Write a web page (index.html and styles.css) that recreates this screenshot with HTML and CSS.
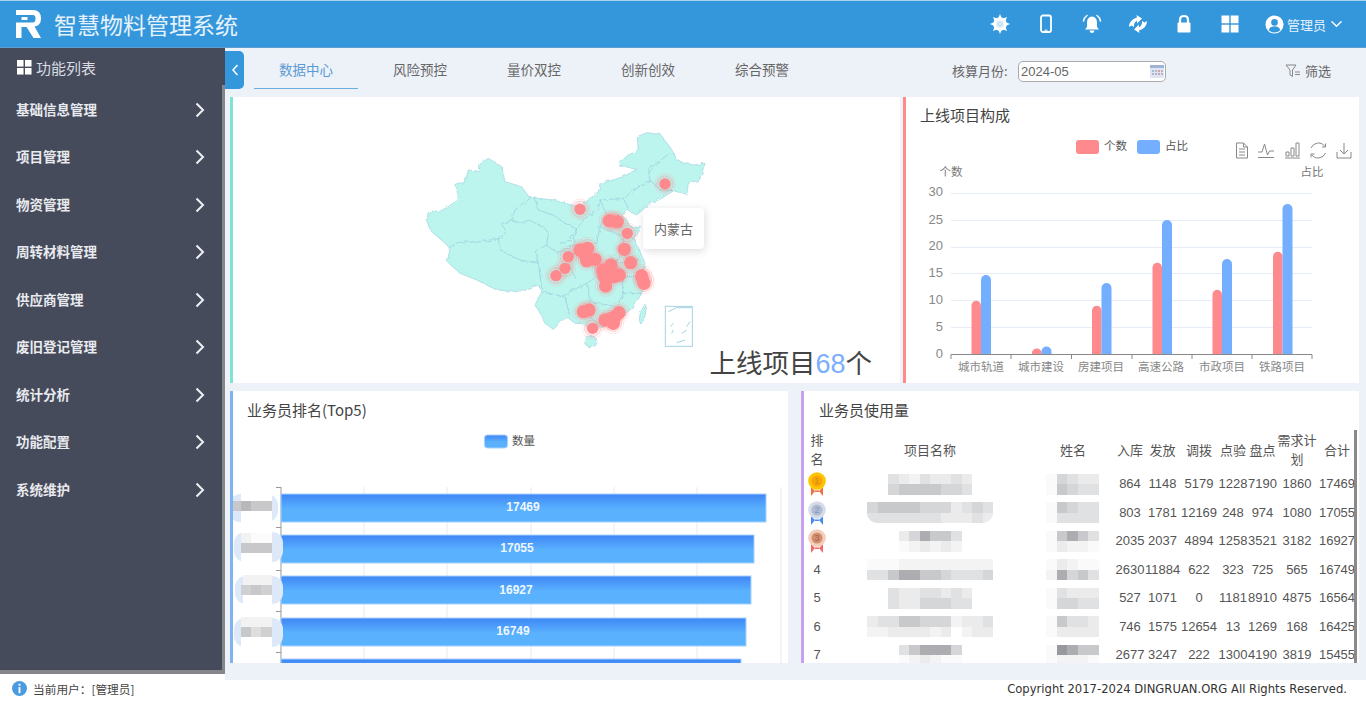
FILE: index.html
```html
<!DOCTYPE html>
<html lang="zh-CN">
<head>
<meta charset="utf-8">
<title>智慧物料管理系统</title>
<link rel="stylesheet" href="styles.css">
</head>
<body>
<div class="app">
  <header class="topbar">
    <svg class="logo" viewBox="0 0 25 28"><path class="w" fill-rule="evenodd" d="M0 0H17Q25 0 25 8.500Q25 15.500 18.500 16.500L25 28H17.500L10.500 17H5.500V28H0V12.500H17Q19.500 12.500 19.500 8.500Q19.500 5 17 5H0Z"/><rect class="w" x="5.500" y="7" width="6" height="3"/></svg>
    <div class="brand">智慧物料管理系统</div>
    <nav class="tools">
      <svg class="ti" viewBox="0 0 20 20"><circle class="w" cx="10" cy="10" r="6.800"/><path class="w" d="M10 0l1.700 4h-3.400zM10 20l-1.700-4h3.400zM0 10l4-1.700v3.400zM20 10l-4 1.700v-3.400zM3 3l4 1.500-2.500 2.500zM17 17l-4-1.500 2.500-2.500zM17 3l-1.500 4-2.500-2.500zM3 17l1.500-4 2.500 2.500z"/><circle class="sunc" cx="10" cy="10" r="3.500"/></svg>
      <svg class="ti" viewBox="0 0 20 20"><rect class="ol" x="5" y="1.500" width="10" height="16.500" rx="2"/><rect class="w" x="8.500" y="15.700" width="3" height="1"/></svg>
      <svg class="ti" viewBox="0 0 20 20"><path class="w" d="M10 2.500Q15 3 15 9V13L17 15.500H3L5 13V9Q5 3 10 2.500ZM7.500 16.500H12.500Q12 19 10 19T7.500 16.500Z"/><path class="ols" d="M1.500 7Q2 3.500 5 1.500M18.500 7Q18 3.500 15 1.500"/></svg>
      <svg class="ti" viewBox="0 0 20 20"><path class="w" d="M1 13Q1 6 9 3.500L8.500 1L14 4.500L9 9.500L9 6.800Q5.500 8.500 6 13L3.500 11.500ZM19 7Q19 14 11 16.500L11.500 19L6 15.500L11 10.500L11 13.200Q14.500 11.500 14 7L16.500 8.500Z"/></svg>
      <svg class="ti" viewBox="0 0 20 20"><path class="ols2" d="M6 9V6Q6 2 10 2T14 6V9"/><rect class="w" x="3.500" y="8.500" width="13" height="10" rx="1"/></svg>
      <svg class="ti" viewBox="0 0 20 20"><rect class="w" x="1.500" y="1.500" width="7.800" height="7.800"/><rect class="w" x="10.700" y="1.500" width="7.800" height="7.800"/><rect class="w" x="1.500" y="10.700" width="7.800" height="7.800"/><rect class="w" x="10.700" y="10.700" width="7.800" height="7.800"/></svg>
      <div class="user">
        <svg class="av" viewBox="0 0 20 20"><circle class="w" cx="10" cy="10" r="9.500"/><circle class="bl" cx="10" cy="7.800" r="3.500"/><path class="bl" d="M3.800 16Q5 11.800 10 11.800T16.200 16Q13.500 18.300 10 18.300T3.800 16Z"/></svg>
        <span>管理员</span>
        <svg class="ch" viewBox="0 0 12 8"><path class="ols" d="M1 1.500L6 6.500L11 1.500"/></svg>
      </div>
    </nav>
  </header>

  <div class="middle">
    <aside class="side">
      <div class="side-head">
        <svg class="side-ic" viewBox="0 0 16 16"><rect class="w" width="7" height="7"/><rect class="w" x="8.500" width="7" height="7"/><rect class="w" y="8.500" width="7" height="7"/><rect class="w" x="8.500" y="8.500" width="7" height="7"/></svg>
        <span>功能列表</span>
      </div>
      <ul class="menu">
        <li>基础信息管理<svg class="arr" viewBox="0 0 10 16"><path d="M1.500 1.500L8 8L1.500 14.500"/></svg></li>
        <li>项目管理<svg class="arr" viewBox="0 0 10 16"><path d="M1.500 1.500L8 8L1.500 14.500"/></svg></li>
        <li>物资管理<svg class="arr" viewBox="0 0 10 16"><path d="M1.500 1.500L8 8L1.500 14.500"/></svg></li>
        <li>周转材料管理<svg class="arr" viewBox="0 0 10 16"><path d="M1.500 1.500L8 8L1.500 14.500"/></svg></li>
        <li>供应商管理<svg class="arr" viewBox="0 0 10 16"><path d="M1.500 1.500L8 8L1.500 14.500"/></svg></li>
        <li>废旧登记管理<svg class="arr" viewBox="0 0 10 16"><path d="M1.500 1.500L8 8L1.500 14.500"/></svg></li>
        <li>统计分析<svg class="arr" viewBox="0 0 10 16"><path d="M1.500 1.500L8 8L1.500 14.500"/></svg></li>
        <li>功能配置<svg class="arr" viewBox="0 0 10 16"><path d="M1.500 1.500L8 8L1.500 14.500"/></svg></li>
        <li>系统维护<svg class="arr" viewBox="0 0 10 16"><path d="M1.500 1.500L8 8L1.500 14.500"/></svg></li>
      </ul>
      <div class="side-scroll"></div>
    </aside>

    <main class="content">
      <div class="tabbar">
        <button class="collapse"><svg viewBox="0 0 10 16"><path d="M7.500 3L3 8L7.500 13"/></svg></button>
        <div class="tabs">
          <a class="tab on">数据中心</a><a class="tab">风险预控</a><a class="tab">量价双控</a><a class="tab">创新创效</a><a class="tab">综合预警</a>
        </div>
        <label class="month">核算月份:</label>
        <div class="date">2024-05
          <svg class="cal" viewBox="0 0 14 13"><rect class="cal1" width="14" height="13" rx="1"/><rect class="cal2" width="14" height="3"/><rect class="cal3" x="2" y="5" width="2" height="2"/><rect class="cal3" x="5" y="5" width="2" height="2"/><rect class="cal4" x="8" y="5" width="2" height="2"/><rect class="cal3" x="11" y="5" width="2" height="2"/><rect class="cal3" x="2" y="8" width="2" height="2"/><rect class="cal3" x="5" y="8" width="2" height="2"/><rect class="cal4" x="8" y="8" width="2" height="2"/><rect class="cal3" x="11" y="8" width="2" height="2"/></svg>
        </div>
        <div class="filter">
          <svg class="fic" viewBox="0 0 16 14"><path class="fl" d="M1 1H11L7.500 6V12.500L5 11V6Z"/><path class="fl" d="M10 8H15M10 10.500H15"/></svg>
          <span>筛选</span>
        </div>
      </div>

      <div class="row row-top">
        <section class="panel map-panel">
          <svg class="map" viewBox="0 0 900 720">
            <defs>
              <g id="d"><circle class="halo2" r="31"/><circle class="halo1" r="25"/><circle class="dot" r="17"/></g>
              <g id="c"><circle class="dot" r="20"/></g>
              <filter id="wig" x="-5%" y="-5%" width="110%" height="110%"><feTurbulence type="fractalNoise" baseFrequency=".07" numOctaves="2" seed="4"/><feDisplacementMap in="SourceGraphic" scale="12"/></filter>
            </defs>
            <g class="wiggle">
            <path class="land" d="M47 295L65 273L85 277L130 250L145 230L135 193L165 187L175 150L208 155L210 133L235 115L275 140L285 185L335 200L358 232L430 240L475 252L490 258L520 252L565 215L570 192L640 170L680 148L625 135L650 108L685 90L682 50L710 38L750 42L785 88L800 122L850 135L885 130L868 180L835 190L830 225L790 212L755 235L715 255L680 285L650 268L635 285L650 300L662 322L695 322L672 355L690 395L705 430L698 450L715 480L695 520L672 560L640 585L600 610L570 620L540 640L525 612L495 610L470 590L430 628L405 610L385 570L375 555L395 515L385 495L320 515L260 510L200 480L150 460L112 425L120 385L100 365L65 335L47 295Z"/>
            <ellipse class="land" cx="543" cy="665" rx="18" ry="17"/>
            <path class="land" d="M705 553Q712 565 702 600L692 612Q680 590 705 553Z"/>
            <path class="prov" d="M115 385L135 370L165 365L200 367L270 355L288 335L275 310L305 300L315 270L360 235M305 300L335 310L355 300L400 320L415 340L410 375L378 392L385 430L330 420L270 390L265 355M375 233L385 270L430 285L465 310L500 325L480 360L450 370M385 430L395 505M410 375L445 400L490 375L500 325L525 295L565 270L570 240L640 235L680 205L720 180L715 150L745 125L780 100M720 180L750 210L790 212M640 235L655 265M570 240L590 285L570 320L560 370L490 375M570 320L640 350L672 355M640 350L640 385L620 430L690 420M620 430L640 470L690 470M640 470L640 520L695 520M640 520L620 560L540 545L530 490L560 470L555 430L490 400L475 430L500 480M530 490L480 515L465 530L395 515M465 530L480 590M540 545L540 590L570 620M560 470L620 470"/>
            </g>
            <rect class="sea" x="766" y="559" width="81" height="120"/>
            <path class="sea2" d="M775 575L800 563L845 563M782 620L790 610M830 620L840 605M800 668L825 660M785 640L790 630M815 640L830 630"/>
            <use href="#d" x="765" y="192"/><use href="#d" x="510" y="268"/>
            <use href="#d" x="598" y="302"/><use href="#d" x="622" y="305"/><use href="#d" x="610" y="303"/><use href="#d" x="652" y="340"/>
            <use href="#d" x="643" y="388"/><use href="#d" x="662" y="428"/><use href="#d" x="695" y="465"/><use href="#d" x="702" y="490"/><use href="#d" x="700" y="478"/>
            <use href="#d" x="475" y="410"/><use href="#d" x="465" y="445"/><use href="#d" x="438" y="467"/>
            <use href="#d" x="510" y="390"/><use href="#d" x="533" y="383"/><use href="#d" x="530" y="420"/><use href="#d" x="555" y="418"/>
            <use href="#d" x="578" y="450"/><use href="#d" x="603" y="435"/><use href="#d" x="582" y="465"/><use href="#d" x="610" y="465"/><use href="#d" x="628" y="465"/><use href="#d" x="587" y="498"/>
            <use href="#d" x="520" y="575"/><use href="#d" x="537" y="570"/>
            <use href="#d" x="585" y="600"/><use href="#d" x="605" y="595"/><use href="#d" x="627" y="578"/><use href="#d" x="610" y="610"/><use href="#d" x="548" y="625"/>
            <use href="#c" x="510" y="390"/><use href="#c" x="533" y="385"/><use href="#c" x="525" y="405"/><use href="#c" x="530" y="422"/><use href="#c" x="555" y="418"/>
            <use href="#c" x="578" y="450"/><use href="#c" x="603" y="435"/><use href="#c" x="590" y="455"/><use href="#c" x="582" y="468"/><use href="#c" x="605" y="460"/><use href="#c" x="612" y="470"/><use href="#c" x="628" y="465"/>
            <use href="#c" x="598" y="302"/><use href="#c" x="622" y="305"/>
            <use href="#c" x="695" y="468"/><use href="#c" x="702" y="490"/>
            <use href="#c" x="520" y="575"/><use href="#c" x="537" y="570"/>
            <use href="#c" x="585" y="600"/><use href="#c" x="605" y="595"/><use href="#c" x="627" y="578"/><use href="#c" x="610" y="610"/><use href="#c" x="615" y="590"/>
            <use href="#c" x="662" y="428"/><use href="#c" x="587" y="498"/><use href="#c" x="643" y="388"/>
          </svg>
          <div class="tooltip">内蒙古</div>
          <div class="online">上线项目<b>68</b>个</div>
        </section>

        <section class="panel chart-panel red">
          <h2 class="ptitle">上线项目构成</h2>
          <svg class="chart" width="453" height="251" viewBox="906 135 453 251">
            <rect class="sr" x="1076" y="140" width="23" height="14" rx="3"/><text class="lg" x="1104" y="150">个数</text>
            <rect class="sb" x="1137" y="140" width="23" height="14" rx="3"/><text class="lg" x="1165" y="150">占比</text>
            <g class="tb">
              <path d="M1236.500 143H1243.500L1247.500 147V158H1236.500ZM1243.500 143V147H1247.500M1239 149H1245M1239 152H1245M1239 155H1245"/>
              <path d="M1258 152H1262L1264.500 144L1267.500 155L1269.500 151H1274M1258 157.500H1274"/>
              <path d="M1286 152H1289V156H1286ZM1291 148H1294V156H1291ZM1296 143H1299V156H1296ZM1285 158H1300"/>
              <path d="M1311 148A8 8 0 0 1 1325 146.500M1325.500 153A8 8 0 0 1 1311.500 154.500M1322 147H1325.500V143.500M1314.500 154H1311V157.500"/>
              <path d="M1344 143V154M1340 150L1344 154L1348 150M1337 152V158H1351V152"/>
            </g>
            <text class="ax" x="951" y="176" text-anchor="middle">个数</text>
            <text class="ax" x="1312" y="176" text-anchor="middle">占比</text>
            <g class="grid">
              <path d="M951 193.500H1312M951 220.500H1312M951 247.500H1312M951 273.500H1312M951 300.500H1312M951 327.500H1312"/>
            </g>
            <text class="yl" x="943" y="196" text-anchor="end">30</text>
            <text class="yl" x="943" y="224" text-anchor="end">25</text>
            <text class="yl" x="943" y="250" text-anchor="end">20</text>
            <text class="yl" x="943" y="277" text-anchor="end">15</text>
            <text class="yl" x="943" y="304" text-anchor="end">10</text>
            <text class="yl" x="943" y="331" text-anchor="end">5</text>
            <text class="yl" x="943" y="358" text-anchor="end">0</text>
            <g class="sr">
              <path d="M971.500 354V305.500a4.750 4.750 0 0 1 9.500 0V354Z"/>
              <path d="M1032 354V352.500a4.750 4 0 0 1 9.500 0V354Z"/>
              <path d="M1092 354V310.500a4.750 4.750 0 0 1 9.500 0V354Z"/>
              <path d="M1152.500 354V267.500a4.750 4.750 0 0 1 9.500 0V354Z"/>
              <path d="M1212.500 354V294.500a4.750 4.750 0 0 1 9.500 0V354Z"/>
              <path d="M1273 354V256.500a4.750 4.750 0 0 1 9.500 0V354Z"/>
            </g>
            <g class="sb">
              <path d="M981 354V280a5 5 0 0 1 10 0V354Z"/>
              <path d="M1041.500 354V351.500a5 5 0 0 1 10 0V354Z"/>
              <path d="M1101.500 354V288a5 5 0 0 1 10 0V354Z"/>
              <path d="M1162 354V225a5 5 0 0 1 10 0V354Z"/>
              <path d="M1222 354V264a5 5 0 0 1 10 0V354Z"/>
              <path d="M1282.500 354V209a5 5 0 0 1 10 0V354Z"/>
            </g>
            <path class="axis" d="M951 359V354.500H1312V359M1011 354.500V359M1071.500 354.500V359M1132 354.500V359M1192 354.500V359M1252 354.500V359"/>
            <text class="xl" x="981" y="371" text-anchor="middle">城市轨道</text>
            <text class="xl" x="1041" y="371" text-anchor="middle">城市建设</text>
            <text class="xl" x="1101" y="371" text-anchor="middle">房建项目</text>
            <text class="xl" x="1161" y="371" text-anchor="middle">高速公路</text>
            <text class="xl" x="1222" y="371" text-anchor="middle">市政项目</text>
            <text class="xl" x="1282" y="371" text-anchor="middle">铁路项目</text>
          </svg>
        </section>
      </div>

      <div class="row row-bot">
        <section class="panel rank-panel">
          <h2 class="ptitle big">业务员排名(Top5)</h2>
          <svg class="chart" width="555" height="233" viewBox="233 430 555 233">
            <defs>
              <linearGradient id="bar" x1="0" y1="0" x2="0" y2="1"><stop offset="0" stop-color="#3f86f5"/><stop offset=".55" stop-color="#5ab2ff"/></linearGradient>
            </defs>
            <rect class="lb" x="484.500" y="435" width="23" height="13" rx="3"/>
            <text class="lg" x="512" y="445">数量</text>
            <path class="vgrid" d="M364 487V663M447 487V663M531 487V663M614 487V663M697 487V663M781 487V663"/>
            <path class="axis2" d="M281 487V663M276 487.500H281M276 527.500H281M276 570.500H281M276 611.500H281M276 652.500H281"/>
            <rect class="lb" x="281" y="494" width="485" height="28"/>
            <rect class="lb" x="281" y="535" width="473" height="28"/>
            <rect class="lb" x="281" y="576" width="470" height="28"/>
            <rect class="lb" x="281" y="618" width="465" height="28"/>
            <rect class="lb" x="281" y="659" width="460" height="28"/>
            <text class="val" x="523" y="511" text-anchor="middle">17469</text>
            <text class="val" x="517" y="552" text-anchor="middle">17055</text>
            <text class="val" x="516" y="594" text-anchor="middle">16927</text>
            <text class="val" x="513" y="635" text-anchor="middle">16749</text>
            <rect class="pill" x="229" y="494" width="49" height="28" rx="11"/><rect class="pw" x="241" y="494" width="31" height="28"/>
            <rect class="m5" x="228" y="501" width="13" height="10"/><rect class="m6" x="241" y="501" width="10" height="10"/><rect class="m5" x="251" y="501" width="21" height="10"/>
            <rect class="pill" x="234" y="532" width="49" height="30" rx="11"/><rect class="pw" x="241" y="532" width="31" height="30"/>
            <rect class="m1" x="241" y="533" width="10" height="10"/><rect class="m0" x="251" y="533" width="21" height="10"/><rect class="m5" x="241" y="543" width="31" height="10"/>
            <rect class="pill" x="235" y="576" width="48" height="28" rx="11"/><rect class="pw" x="243" y="576" width="29" height="28"/>
            <rect class="m1" x="243" y="575" width="29" height="10"/><rect class="m4" x="241" y="585" width="10" height="10"/><rect class="m5" x="251" y="585" width="10" height="10"/><rect class="m4" x="261" y="585" width="11" height="10"/>
            <rect class="pill" x="234" y="618" width="49" height="29" rx="11"/><rect class="pw" x="241" y="618" width="31" height="29"/>
            <rect class="m1" x="241" y="617" width="31" height="10"/><rect class="m5" x="241" y="627" width="10" height="10"/><rect class="m3" x="251" y="627" width="10" height="10"/><rect class="m4" x="261" y="627" width="11" height="10"/>
          </svg>
        </section>

        <section class="panel use-panel">
          <h2 class="ptitle big">业务员使用量</h2>
          <div class="table-wrap">
            <table class="stats">
              <colgroup><col class="c1"><col class="c2"><col class="c3"><col class="c4"><col class="c5"><col class="c6"><col class="c7"><col class="c8"><col class="c9"><col class="c10"></colgroup>
              <thead><tr><th>排名</th><th>项目名称</th><th>姓名</th><th>入库</th><th>发放</th><th>调拨</th><th>点验</th><th>盘点</th><th>需求计划</th><th>合计</th></tr></thead>
              <tbody>
                <tr>
                  <td><svg class="medal" viewBox="0 0 18 24"><path class="rib1" d="M3 15L7 19L3 24ZM15 15L11 19L15 24ZM7 18.500H11V20H7Z"/><circle class="m-g" cx="9" cy="9" r="8.800"/><circle class="m-g2" cx="9" cy="9" r="5.500"/><text class="mt mt1" x="9" y="12" text-anchor="middle">1</text></svg></td>
                  <td><div class="mos p8"><i class="g3"></i><i class="g2"></i><i class="g1"></i><i class="g3"></i><i class="g2"></i><i class="g2"></i><i class="g3"></i><i class="g2"></i><i class="g4"></i><i class="g5"></i><i class="g5"></i><i class="g5"></i><i class="g5"></i><i class="g4"></i><i class="g4"></i><i class="g3"></i></div></td>
                  <td><div class="mos n5"><i class="g0"></i><i class="g4"></i><i class="g3"></i><i class="g2"></i><i class="g2"></i><i class="g0"></i><i class="g5"></i><i class="g4"></i><i class="g3"></i><i class="g3"></i></div></td>
                  <td>864</td><td>1148</td><td>5179</td><td>1228</td><td>7190</td><td>1860</td><td>17469</td>
                </tr>
                <tr>
                  <td><svg class="medal" viewBox="0 0 18 24"><path class="rib2" d="M3 15L7 19L3 24ZM15 15L11 19L15 24ZM7 18.500H11V20H7Z"/><circle class="m-s" cx="9" cy="9" r="8.800"/><circle class="m-s2" cx="9" cy="9" r="5.500"/><text class="mt mt2" x="9" y="12" text-anchor="middle">2</text></svg></td>
                  <td><div class="mos p12 rounded"><i class="g4"></i><i class="g5"></i><i class="g5"></i><i class="g5"></i><i class="g5"></i><i class="g4"></i><i class="g4"></i><i class="g4"></i><i class="g2"></i><i class="g3"></i><i class="g4"></i><i class="g3"></i><i class="g3"></i><i class="g3"></i><i class="g3"></i><i class="g3"></i><i class="g3"></i><i class="g3"></i><i class="g3"></i><i class="g2"></i><i class="g2"></i><i class="g2"></i><i class="g3"></i><i class="g2"></i></div></td>
                  <td><div class="mos n5"><i class="g0"></i><i class="g5"></i><i class="g4"></i><i class="g3"></i><i class="g3"></i><i class="g0"></i><i class="g3"></i><i class="g3"></i><i class="g3"></i><i class="g3"></i></div></td>
                  <td>803</td><td>1781</td><td>12169</td><td>248</td><td>974</td><td>1080</td><td>17055</td>
                </tr>
                <tr>
                  <td><svg class="medal" viewBox="0 0 18 24"><path class="rib3" d="M3 15L7 19L3 24ZM15 15L11 19L15 24ZM7 18.500H11V20H7Z"/><circle class="m-b" cx="9" cy="9" r="8.800"/><circle class="m-b2" cx="9" cy="9" r="5.500"/><text class="mt mt3" x="9" y="12" text-anchor="middle">3</text></svg></td>
                  <td><div class="mos p6"><i class="g2"></i><i class="g4"></i><i class="g6"></i><i class="g5"></i><i class="g5"></i><i class="g3"></i><i class="g0"></i><i class="g1"></i><i class="g2"></i><i class="g1"></i><i class="g2"></i><i class="g1"></i></div></td>
                  <td><div class="mos n5"><i class="g0"></i><i class="g5"></i><i class="g6"></i><i class="g5"></i><i class="g3"></i><i class="g0"></i><i class="g2"></i><i class="g1"></i><i class="g1"></i><i class="g0"></i></div></td>
                  <td>2035</td><td>2037</td><td>4894</td><td>1258</td><td>3521</td><td>3182</td><td>16927</td>
                </tr>
                <tr>
                  <td>4</td>
                  <td><div class="mos p12"><i class="g0"></i><i class="g0"></i><i class="g0"></i><i class="g1"></i><i class="g1"></i><i class="g1"></i><i class="g1"></i><i class="g1"></i><i class="g1"></i><i class="g1"></i><i class="g1"></i><i class="g1"></i><i class="g3"></i><i class="g3"></i><i class="g5"></i><i class="g6"></i><i class="g6"></i><i class="g5"></i><i class="g5"></i><i class="g4"></i><i class="g3"></i><i class="g3"></i><i class="g3"></i><i class="g4"></i></div></td>
                  <td><div class="mos n5"><i class="g0"></i><i class="g2"></i><i class="g1"></i><i class="g0"></i><i class="g0"></i><i class="g1"></i><i class="g6"></i><i class="g4"></i><i class="g5"></i><i class="g3"></i></div></td>
                  <td>2630</td><td>11884</td><td>622</td><td>323</td><td>725</td><td>565</td><td>16749</td>
                </tr>
                <tr>
                  <td>5</td>
                  <td><div class="mos p8"><i class="g3"></i><i class="g2"></i><i class="g2"></i><i class="g3"></i><i class="g3"></i><i class="g2"></i><i class="g3"></i><i class="g2"></i><i class="g3"></i><i class="g2"></i><i class="g2"></i><i class="g4"></i><i class="g4"></i><i class="g4"></i><i class="g3"></i><i class="g3"></i></div></td>
                  <td><div class="mos n5"><i class="g0"></i><i class="g3"></i><i class="g2"></i><i class="g2"></i><i class="g2"></i><i class="g0"></i><i class="g4"></i><i class="g4"></i><i class="g3"></i><i class="g3"></i></div></td>
                  <td>527</td><td>1071</td><td>0</td><td>1181</td><td>8910</td><td>4875</td><td>16564</td>
                </tr>
                <tr>
                  <td>6</td>
                  <td><div class="mos p12"><i class="g2"></i><i class="g3"></i><i class="g3"></i><i class="g5"></i><i class="g5"></i><i class="g4"></i><i class="g4"></i><i class="g4"></i><i class="g1"></i><i class="g2"></i><i class="g2"></i><i class="g3"></i><i class="g1"></i><i class="g1"></i><i class="g2"></i><i class="g2"></i><i class="g2"></i><i class="g2"></i><i class="g1"></i><i class="g2"></i><i class="w0"></i><i class="g1"></i><i class="g2"></i><i class="g2"></i></div></td>
                  <td><div class="mos n5"><i class="g0"></i><i class="g5"></i><i class="g3"></i><i class="g3"></i><i class="g2"></i><i class="g0"></i><i class="g2"></i><i class="g2"></i><i class="g2"></i><i class="g2"></i></div></td>
                  <td>746</td><td>1575</td><td>12654</td><td>13</td><td>1269</td><td>168</td><td>16425</td>
                </tr>
                <tr>
                  <td>7</td>
                  <td><div class="mos p6"><i class="g3"></i><i class="g5"></i><i class="g6"></i><i class="g6"></i><i class="g6"></i><i class="g4"></i><i class="g0"></i><i class="g1"></i><i class="g2"></i><i class="g1"></i><i class="g0"></i><i class="g0"></i></div></td>
                  <td><div class="mos n5"><i class="g0"></i><i class="g7"></i><i class="g6"></i><i class="g5"></i><i class="g5"></i><i class="g0"></i><i class="g1"></i><i class="g1"></i><i class="g1"></i><i class="g0"></i></div></td>
                  <td>2677</td><td>3247</td><td>222</td><td>1300</td><td>4190</td><td>3819</td><td>15455</td>
                </tr>
              </tbody>
            </table>
            <div class="tscroll"></div>
          </div>
        </section>
      </div>
    </main>
  </div>

  <footer class="foot">
    <div class="cur">
      <svg class="info" viewBox="0 0 16 16"><circle class="bl2" cx="8" cy="8" r="8"/><rect class="w" x="7" y="3" width="2" height="2"/><rect class="w" x="7" y="6.500" width="2" height="6.500"/></svg>
      <span>当前用户：[管理员]</span>
    </div>
    <div class="copy">Copyright 2017-2024 DINGRUAN.ORG All Rights Reserved.</div>
  </footer>
</div>
</body>
</html>
```

FILE: styles.css
```css
* { box-sizing: border-box; }
html, body { margin: 0; height: 703px; overflow: hidden; background: #fff; }
body { font-family: "Liberation Sans", "Noto Sans CJK SC", sans-serif; color: #555; }
.app { display: flex; flex-direction: column; height: 703px; }

/* common svg fills */
.w { fill: #fff; }
.bl { fill: #3597db; }
.bl2 { fill: #4a9be0; }
.ol { fill: none; stroke: #fff; stroke-width: 1.8; }
.ols { fill: none; stroke: #fff; stroke-width: 1.500; stroke-linecap: round; }
.ols2 { fill: none; stroke: #fff; stroke-width: 2.200; }
.sunc { fill: #cfe6f7; }

/* header */
.topbar { flex: none; height: 48px; display: flex; align-items: center; background: #3597db; border-top: 1px solid #a9d3ef; border-bottom: 1px solid #5a9fd0; padding-left: 16px; }
.logo { width: 25px; height: 28px; flex: none; }
.brand { margin-left: 13px; font-size: 23px; color: #e6f2fb; font-family: "Noto Sans CJK SC", sans-serif; letter-spacing: 0; line-height: 28px; }
.tools { margin-left: auto; display: flex; align-items: center; padding-right: 24px; }
.ti { width: 20px; height: 20px; margin-right: 26px; flex: none; }
.user { display: flex; align-items: center; margin-left: -1px; color: #e6f2fb; font-size: 13px; font-family: "Noto Sans CJK SC", sans-serif; }
.av { width: 19px; height: 19px; margin-right: 3px; }
.ch { width: 11px; height: 8px; margin-left: 5px; }

/* middle */
.middle { flex: none; height: 632px; display: flex; align-items: flex-start; }
.side { position: relative; flex: none; width: 225px; height: 626px; background: #464b5b; border-bottom: 4px solid #85868a; color: #fff; }
.side-head { height: 38px; display: flex; align-items: center; padding-left: 17px; font-size: 15px; color: #d9dce4; font-family: "Noto Sans CJK SC", sans-serif; }
.side-ic { width: 15px; height: 15px; margin-right: 4px; }
.menu { list-style: none; margin: 0; padding: 0; }
.menu li { height: 47.500px; display: flex; align-items: center; justify-content: space-between; padding: 0 20px 2px 16px; font-size: 13.500px; font-weight: 700; color: #e8eaef; font-family: "Noto Sans CJK SC", sans-serif; }
.arr { width: 10px; height: 16px; margin-top: 2px; fill: none; stroke: #eef0f4; stroke-width: 2; }
.side-scroll { position: absolute; right: 0; top: 37px; bottom: 0; width: 3px; background: #85868a; }

/* content */
.content { flex: 1; height: 632px; background: #edf1f8; display: flex; flex-direction: column; font-family: "Noto Sans CJK SC", sans-serif; }
.tabbar { flex: none; height: 49px; display: flex; align-items: center; padding-bottom: 2px; font-size: 13px; color: #666; }
.collapse { align-self: flex-start; margin-top: 3px; width: 19px; height: 38px; padding: 0; border: 0; background: #3597db; border-radius: 0 5px 5px 0; display: flex; align-items: center; justify-content: center; }
.collapse svg { width: 10px; height: 16px; fill: none; stroke: #fff; stroke-width: 1.500; }
.tabs { align-self: flex-start; display: flex; gap: 10px; margin: 3px 0 0 10px; }
.tab { width: 104px; height: 38px; line-height: 36px; text-align: center; font-size: 13.500px; color: #666; }
.tab.on { color: #5b9bd5; border-bottom: 1px solid #6aaee0; }
.month { margin: -1px 0 0 138px; padding-bottom: 1px; width: 66px; font-size: 13px; color: #666; white-space: nowrap; }
.date { position: relative; width: 148px; height: 21px; line-height: 19px; padding-left: 2px; background: #fff; border: 1px solid #aaa; border-radius: 5px; font-size: 13px; color: #666; font-family: "Liberation Sans", sans-serif; }
.cal { position: absolute; right: 1px; top: 3px; width: 14px; height: 13px; }
.cal1 { fill: #dfe5f2; }
.cal2 { fill: #9fb3d6; }
.cal3 { fill: #a9b8d4; }
.cal4 { fill: #e89a8f; }
.filter { margin: -1px 0 0 119px; padding-bottom: 1px; display: flex; align-items: center; font-size: 13px; color: #666; }
.fic { width: 16px; height: 14px; margin-right: 4px; }
.fl { fill: none; stroke: #888; stroke-width: 1; }

.row { flex: none; display: flex; padding-left: 5px; }
.row-top { height: 286px; gap: 3px; }
.row-bot { height: 272px; margin-top: 8px; gap: 13px; }
.panel { position: relative; background: #fff; border-left: 3px solid #000; overflow: hidden; }
.map-panel { width: 670px; border-left-color: #7de3d4; }
.chart-panel { width: 456px; }
.red { border-left-color: #ff8a8e; }
.rank-panel { width: 558px; border-left-color: #7fb3f0; }
.use-panel { width: 558px; border-left-color: #c9a0f0; }

.ptitle { margin: 0; padding-left: 14px; font-size: 15px; font-weight: 400; color: #444; height: 38px; line-height: 36px; }
.ptitle.big { height: 39px; line-height: 38px; padding-left: 14px; font-family: "Noto Sans CJK SC", sans-serif; }
.use-panel .ptitle.big { padding-left: 15px; }
.chart { display: block; }

/* map */
.map { display: block; width: 300px; height: 240px; margin: 23px 0 0 177px; }
.wiggle { filter: url(#wig); }
.land { fill: #bcf4ee; stroke: #a8dae2; stroke-width: 2.500; stroke-linejoin: round; }
.prov { fill: none; stroke: #9fd0de; stroke-width: 2.500; stroke-linejoin: round; }
.sea { fill: #fff; stroke: #a3d4e2; stroke-width: 3; }
.sea2 { fill: none; stroke: #a3d4e2; stroke-width: 3; }
.dot { fill: #ff8a8e; }
.halo1 { fill: #ff8a8e; fill-opacity: .2; stroke: #ff8a8e; stroke-opacity: .45; stroke-width: 2; }
.halo2 { fill: none; stroke: #ff8a8e; stroke-opacity: .3; stroke-width: 2; }
.tooltip { position: absolute; left: 410px; top: 111px; width: 61px; height: 41px; line-height: 41px; text-align: center; font-size: 13px; color: #666; background: #fff; border-radius: 4px; box-shadow: 1px 2px 8px rgba(0,0,0,.14); }
.online { position: absolute; right: 28px; top: 246px; font-size: 26.500px; line-height: 38px; color: #444; white-space: nowrap; }
.online b { font-weight: 400; color: #7aaeff; font-family: "Liberation Sans", sans-serif; font-size: 27px; }

/* charts */
text { font-family: "Noto Sans CJK SC", sans-serif; }
.sr { fill: #ff8a8e; }
.sb { fill: #74aeff; }
.lb { fill: url(#bar); stroke: #a7d1ff; stroke-width: 1; }
.lg { font-size: 11.500px; fill: #555; }
.ax { font-size: 11.500px; fill: #777; }
.yl { font-size: 13px; fill: #888; font-family: "Liberation Sans", sans-serif; }
.xl { font-size: 11.500px; fill: #888; }
.val { font-size: 12px; fill: #fff; font-weight: 700; font-family: "Liberation Sans", sans-serif; fill-opacity: .92; }
.tb path { fill: none; stroke: #888; stroke-width: 1; }
.grid path { fill: none; stroke: #e6ecf5; stroke-width: 1; }
.axis { fill: none; stroke: #888; stroke-width: 1; }
.axis2 { fill: none; stroke: #999; stroke-width: 1; }
.vgrid { fill: none; stroke: #e8e8f2; stroke-width: 1; }
.pill { fill: #dde9f8; }
.pw { fill: #fff; }
.m0 { fill: #fbfbfb; }
.m1 { fill: #f2f2f2; }
.m3 { fill: #dedede; }
.m4 { fill: #d0d0d2; }
.m5 { fill: #c8c8ca; }
.m6 { fill: #b8b8bb; }

/* table */
.table-wrap { position: relative; height: 233px; overflow: hidden; }
.stats { table-layout: fixed; width: 552px; margin-left: 1px; border-collapse: collapse; font-family: "Liberation Sans", "Noto Sans CJK SC", sans-serif; font-size: 13px; color: #555; }
.c1 { width: 24px; } .c2 { width: 202px; } .c3 { width: 84px; } .c4 { width: 30px; } .c5 { width: 35px; }
.c6 { width: 38px; } .c7 { width: 30px; } .c8 { width: 29px; } .c9 { width: 40px; } .c10 { width: 40px; }
.stats th { height: 39px; padding: 0 0 2px; font-weight: 400; font-size: 13px; line-height: 19px; color: #555; text-align: center; vertical-align: middle; font-family: "Noto Sans CJK SC", sans-serif; }
.stats td { height: 28.500px; padding: 0; text-align: center; vertical-align: middle; white-space: nowrap; line-height: 16px; }
.mos { display: grid; grid-auto-rows: 10.500px; margin: 0 auto; filter: blur(.7px); }
.p6 { grid-template-columns: repeat(6, 10.500px); width: 63px; }
.p8 { grid-template-columns: repeat(8, 10.500px); width: 84px; }
.p12 { grid-template-columns: repeat(12, 10.500px); width: 126px; }
.n5 { grid-template-columns: repeat(5, 10.500px); width: 52.500px; margin-left: 15px; }
.rounded { border-radius: 0 0 10px 10px; overflow: hidden; }
.g0 { background: #fafafa; }
.g1 { background: #f3f3f3; }
.g2 { background: #ebebec; }
.g3 { background: #e0e1e2; }
.g4 { background: #d5d6d7; }
.g5 { background: #c8c9cb; }
.g6 { background: #adadb1; }
.g7 { background: #98999c; }
.w0 { background: #fff; }
.tscroll { position: absolute; right: 2px; top: 0; bottom: 0; width: 3px; background: #8a8a8a; }
.medal { display: block; width: 18px; height: 24px; margin: 0 auto; }
.rib1 { fill: #f2703a; }
.rib2 { fill: #4a8af0; }
.rib3 { fill: #f2686a; }
.m-g { fill: #ffc400; }
.m-g2 { fill: #f7a60a; }
.m-s { fill: #d5dce8; }
.m-s2 { fill: #aebcd4; }
.m-b { fill: #f6cdb8; }
.m-b2 { fill: #d08f70; }
.mt { font-size: 9px; font-family: "Liberation Sans", sans-serif; }
.mt1 { fill: #d8860a; }
.mt2 { fill: #8496b5; }
.mt3 { fill: #a8634a; }

/* footer */
.foot { flex: none; height: 23px; display: flex; align-items: center; justify-content: space-between; padding: 0 19px 6px 12px; background: #fff; font-size: 12px; color: #444; }
.cur { display: flex; align-items: center; font-family: "Noto Sans CJK SC", sans-serif; font-size: 11.700px; }
.info { width: 15px; height: 15px; margin-right: 6px; }
.copy { font-family: "DejaVu Sans", sans-serif; font-size: 11.600px; color: #333; }
```
